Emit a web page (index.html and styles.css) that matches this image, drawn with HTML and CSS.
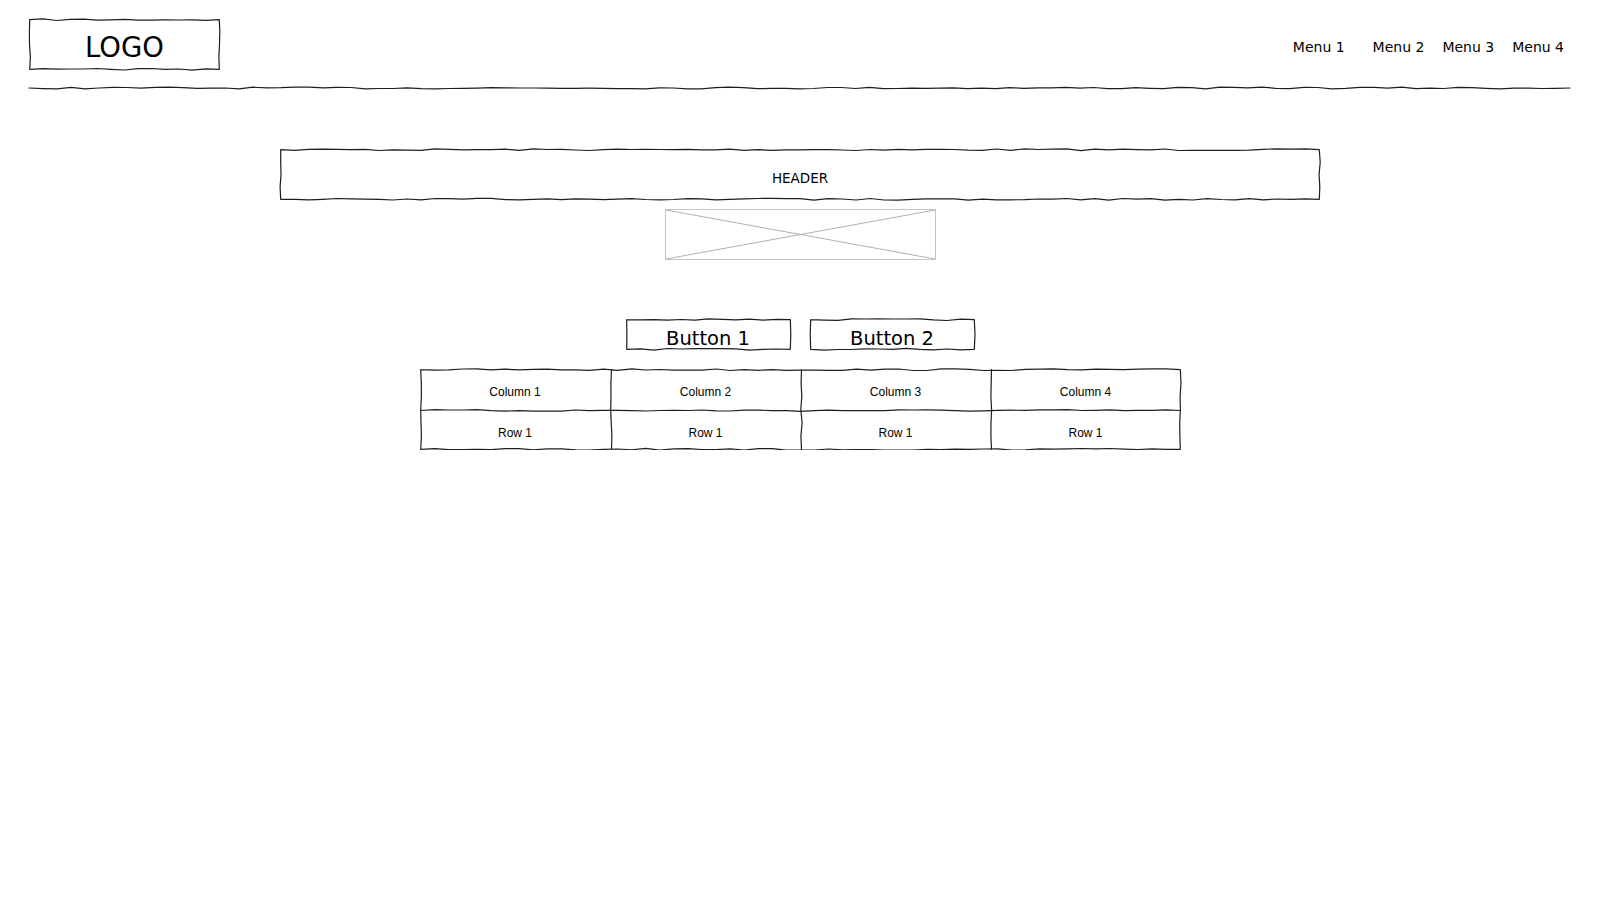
FILE: index.html
```html
<!DOCTYPE html>
<html lang="en">

<head>
    <meta charset="UTF-8">
    <meta name="viewport" content="width=device-width, initial-scale=1.0">
    <title>Wireframe</title>
    <link rel="stylesheet" href="styles.css">
</head>

<body>
    <header class="topbar">
        <div class="logo sketch">LOGO</div>
        <nav class="menu">
            <span>Menu 1</span>
            <span>Menu 2</span>
            <span>Menu 3</span>
            <span>Menu 4</span>
        </nav>
    </header>
    <div class="rule"></div>

    <main class="content">
        <div class="header-box sketch">HEADER</div>

        <div class="image-ph">
            <svg viewBox="0 0 100 100" preserveAspectRatio="none">
                <line x1="0" y1="0" x2="100" y2="100" vector-effect="non-scaling-stroke" />
                <line x1="100" y1="0" x2="0" y2="100" vector-effect="non-scaling-stroke" />
            </svg>
        </div>

        <div class="buttons">
            <div class="btn sketch">Button 1</div>
            <div class="btn sketch">Button 2</div>
        </div>

        <div class="grid">
            <div class="cell">Column 1</div>
            <div class="cell">Column 2</div>
            <div class="cell">Column 3</div>
            <div class="cell">Column 4</div>
            <div class="cell">Row 1</div>
            <div class="cell">Row 1</div>
            <div class="cell">Row 1</div>
            <div class="cell">Row 1</div>
        </div>
    </main>

    <script>
        // hand-drawn look: replace straight borders with slightly wobbly svg strokes
        let seed = 7;
        function rand() {
            seed = (seed * 16807) % 2147483647;
            return seed / 2147483647;
        }

        function wobble(x1, y1, x2, y2) {
            const len = Math.hypot(x2 - x1, y2 - y1);
            const steps = Math.max(2, Math.round(len / 14));
            const nx = -(y2 - y1) / len;
            const ny = (x2 - x1) / len;
            let d = `M${x1.toFixed(1)} ${y1.toFixed(1)}`;
            for (let i = 1; i <= steps; i++) {
                const t = i / steps;
                const off = i === steps ? 0 : (rand() - 0.5) * 1.8;
                const x = x1 + (x2 - x1) * t + nx * off;
                const y = y1 + (y2 - y1) * t + ny * off;
                d += ` L${x.toFixed(1)} ${y.toFixed(1)}`;
            }
            return d;
        }

        function overlay(el, paths) {
            const svg = document.createElementNS("http://www.w3.org/2000/svg", "svg");
            svg.setAttribute("class", "scribble");
            svg.setAttribute("width", el.offsetWidth);
            svg.setAttribute("height", el.offsetHeight);
            const path = document.createElementNS("http://www.w3.org/2000/svg", "path");
            path.setAttribute("d", paths.join(" "));
            svg.appendChild(path);
            el.appendChild(svg);
        }

        function box(w, h) {
            const o = 0.7;
            return [
                wobble(o, o, w - o, o),
                wobble(w - o, o, w - o, h - o),
                wobble(w - o, h - o, o, h - o),
                wobble(o, h - o, o, o)
            ];
        }

        document.querySelectorAll(".sketch").forEach(el => {
            overlay(el, box(el.offsetWidth, el.offsetHeight));
        });

        const rule = document.querySelector(".rule");
        overlay(rule, [wobble(0, 4, rule.offsetWidth, 4)]);

        const grid = document.querySelector(".grid");
        const cells = grid.querySelectorAll(".cell");
        const gw = grid.offsetWidth;
        const gh = grid.offsetHeight;
        const lines = box(gw, gh);
        // inner column lines
        for (let i = 1; i < 4; i++) {
            const x = cells[i].offsetLeft + 0.5;
            lines.push(wobble(x, 0.7, x, gh - 0.7));
        }
        // inner row line
        const y = cells[4].offsetTop + 0.5;
        lines.push(wobble(0.7, y, gw - 0.7, y));
        overlay(grid, lines);
    </script>
</body>

</html>
```

FILE: styles.css
```css
* {
    box-sizing: border-box;
}

body {
    margin: 0;
    background: #fff;
    color: #000;
    font-family: "DejaVu Sans", Verdana, sans-serif;
}

.sketch {
    position: relative;
}

/* wobbly outline, drawn by the script over each box */
.scribble {
    position: absolute;
    left: 0;
    top: 0;
    overflow: visible;
    pointer-events: none;
}

.scribble path {
    fill: none;
    stroke: #1e1e1e;
    stroke-width: 1.2;
    stroke-linejoin: round;
    stroke-linecap: round;
}

.topbar {
    display: flex;
    justify-content: space-between;
    align-items: center;
    padding: 19px 36px 0 29px;
}

.logo {
    width: 191px;
    height: 51px;
    display: flex;
    align-items: center;
    justify-content: center;
    padding-top: 5px;
    font-size: 27.5px;
}

.menu {
    display: flex;
    gap: 18px;
    padding-top: 5px;
    font-size: 14px;
}

.menu span:first-child {
    margin-right: 10px;
}

.rule {
    position: relative;
    height: 8px;
    margin: 14px 30px 0 29px;
}

.content {
    display: flex;
    flex-direction: column;
    align-items: center;
    padding-top: 57px;
}

.header-box {
    width: 1040px;
    height: 51px;
    display: flex;
    align-items: center;
    justify-content: center;
    padding-top: 6px;
    font-size: 13.5px;
}

.image-ph {
    width: 271px;
    height: 51px;
    margin-top: 9px;
    border: 1.5px solid #c4c4c4;
}

.image-ph svg {
    display: block;
    width: 100%;
    height: 100%;
}

.image-ph line {
    stroke: #b0b0b0;
    stroke-width: 1;
}

.buttons {
    display: flex;
    gap: 19px;
    margin-top: 59px;
}

.btn {
    width: 165px;
    height: 31px;
    display: flex;
    align-items: center;
    justify-content: center;
    padding-top: 7px;
    font-size: 19.5px;
}

.grid {
    position: relative;
    display: grid;
    grid-template-columns: 191px repeat(3, 190px);
    grid-template-rows: 41px 40px;
    margin-top: 19px;
    font-family: "Liberation Sans", Arial, sans-serif;
    font-size: 12px;
}

.cell {
    display: flex;
    align-items: center;
    justify-content: center;
    padding-top: 5px;
}
```
